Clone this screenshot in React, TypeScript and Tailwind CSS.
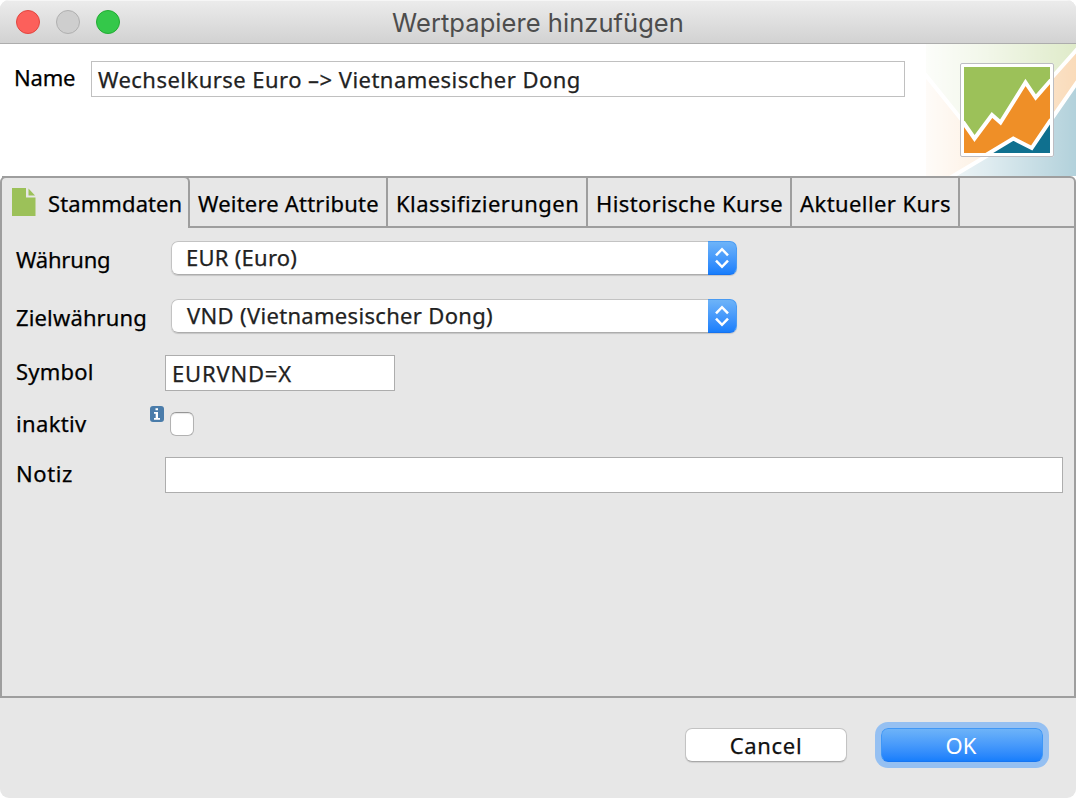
import type { ReactNode } from 'react';

function BannerArt() {
  return (
    <svg className="block h-[132px] w-[150px]" viewBox="926 44 150 132" fill="none">
      <defs>
        <linearGradient id="fade" x1="926" x2="1076" y1="0" y2="0" gradientUnits="userSpaceOnUse">
          <stop offset="0" stopColor="#fff" stopOpacity="0.97" />
          <stop offset="0.4" stopColor="#fff" stopOpacity="0.87" />
          <stop offset="1" stopColor="#fff" stopOpacity="0.68" />
        </linearGradient>
      </defs>
      <rect x="926" y="44" width="150" height="132" fill="#ef8f27" />
      <path d="M926 44H1076V50L1034 98L1000 170L926 76Z" fill="#9cc159" />
      <path d="M953 176L985 157L1034 142L1076 83V176Z" fill="#0f708f" />
      <rect x="926" y="44" width="150" height="132" fill="url(#fade)" />
      <path d="M924 73L970 130M1048 82L1080 46M1046 127L1080 78M948 179L990 154" stroke="#fff" strokeWidth="4" />
      <rect x="960.5" y="63.5" width="93" height="93" fill="#fff" />
      <path d="M964 67H1050V153H964Z" fill="#ef8f27" />
      <path d="M964 67H1050V81L1035.7 97.5L1025.5 83L1000.5 122.5L992 115L974.5 139L964 123Z" fill="#9cc159" />
      <path d="M989 153.5L1013.3 139L1031.7 148.3L1050 121V153Z" fill="#0f708f" />
      <path d="M963 122L974.5 138.5L992 115L1000.5 122.5L1025.5 82.5L1035.7 97.5L1051 80" stroke="#fff" strokeWidth="4" />
      <path d="M986 155L1013.3 138.5L1031.7 148L1051 119.500" stroke="#fff" strokeWidth="4" />
      <path d="M962.500 154.500H1051.500V65.500H962.500Z" stroke="#fff" strokeWidth="3" />
      <rect x="960.5" y="63.5" width="93" height="93" rx="1.5" stroke="#bdbdc2" />
    </svg>
  );
}

function Tab({ className, children }: { className: string; children: ReactNode }) {
  return (
    <div className={`flex h-[50px] items-center border-r-2 border-b-2 border-[#9e9e9e] pt-[2px] whitespace-nowrap ${className}`}>
      {children}
    </div>
  );
}

function Select({ className, children }: { className: string; children: ReactNode }) {
  return (
    <div className="ml-[6px] flex h-[34px] w-[566px] rounded-[7px] bg-white shadow-[0_1px_1px_rgba(0,0,0,0.15)]">
      <div className="flex flex-1 items-center rounded-l-[7px] border border-r-0 border-[#c3c3c3] border-b-[#adadad] pb-[2px] text-[#222]">
        <span className={className}>{children}</span>
      </div>
      <div className="flex w-[29px] items-center justify-center rounded-r-[7px] border border-l-0 border-[#4a9bf2] border-b-[#1672ee] bg-linear-to-b from-[#6db3f8] to-[#177efc]">
        <svg className="h-[22px] w-[14px]" viewBox="0 0 14 22" fill="none" stroke="#fff" strokeWidth="2.5">
          <path d="M1 8.300L7 2.200L13 8.300M1 13.700L7 19.800L13 13.700" />
        </svg>
      </div>
    </div>
  );
}

function Row({ label, className, labelClass, children }: { label: string; className: string; labelClass: string; children: ReactNode }) {
  return (
    <div className={`flex ${className}`}>
      <div className={`flex w-[150px] shrink-0 ${labelClass}`}>{label}</div>
      {children}
    </div>
  );
}

export default function App() {
  return (
    <div className="h-[798px] w-[1076px] bg-white">
      <div className="flex h-full flex-col overflow-hidden rounded-[9px] bg-[#e7e7e7] font-['Noto_Sans',sans-serif] text-[22px] leading-[30px] text-black [-webkit-text-stroke:0.25px]">
        <header className="grid h-[44px] shrink-0 grid-cols-[120px_1fr_120px] items-center border-b border-[#adadad] bg-linear-to-b from-[#ececec] to-[#d2d2d2] shadow-[inset_0_1px_0_#f6f6f6]">
          <div className="flex gap-4 pl-4">
            <span className="size-6 rounded-full border border-[#e2463f] bg-[#fc605b]" />
            <span className="size-6 rounded-full border border-[#b0b0b0] bg-[#cecece]" />
            <span className="size-6 rounded-full border border-[#22ac33] bg-[#34c84a]" />
          </div>
          <h1 className="pt-[2px] text-center font-['Inter',sans-serif] text-[25.5px] tracking-[0.05px] whitespace-nowrap text-[#4d4d4d] [-webkit-text-stroke:0px]">
            Wertpapiere hinzufügen
          </h1>
        </header>

        <section className="flex h-[132px] shrink-0 bg-white">
          <div className="w-[91px] pt-[18px] pl-[14px] tracking-[-0.2px]">Name</div>
          <div className="mt-[17px] mr-[21px] flex h-[36px] flex-1 items-center border border-[#c0c0c0] pb-px pl-[6px] tracking-[0.46px] text-[#222]">
            Wechselkurse Euro –&gt; Vietnamesischer Dong
          </div>
          <BannerArt />
        </section>

        <main className="h-[522px] shrink-0 bg-white bg-linear-to-b from-white from-[4px] to-[#e7e7e7] to-[4px]">
          <div className="h-full rounded-t-[6px] border-2 border-[#9e9e9e] bg-[#e7e7e7]">
            <nav className="flex">
              <div className="-mt-0.5 flex h-[52px] w-[188px] items-center rounded-tr-[6px] border-t-2 border-r-2 border-[#9e9e9e] pl-[10px] whitespace-nowrap">
                <svg className="mr-[12px] mb-[2px] h-[28px] w-[24px] shrink-0" viewBox="0 0 24 28" fill="#9cc159">
                  <path d="M0 0H14V9.500H23.500V28H0Z" />
                  <path d="M16.500 0.500L23 7.500H16.500Z" />
                </svg>
                <span className="tracking-[0.1px]">Stammdaten</span>
              </div>
              <Tab className="w-[198px] pl-[8px] tracking-[0.2px]">Weitere Attribute</Tab>
              <Tab className="w-[200px] pl-[8px] tracking-[0.43px]">Klassifizierungen</Tab>
              <Tab className="w-[204px] pl-[8px] tracking-[0.38px]">Historische Kurse</Tab>
              <Tab className="w-[168px] pl-[8px] tracking-[0.41px]">Aktueller Kurs</Tab>
              <div className="h-[50px] flex-1 border-b-2 border-[#9e9e9e]" />
            </nav>

            <form className="flex flex-col pt-[13px] pl-[13px]">
              <Row label="Währung" className="h-[58px]" labelClass="pt-[3px] pl-px tracking-[-0.2px]">
                <Select className="pl-[14px] tracking-[0.25px]">EUR (Euro)</Select>
              </Row>
              <Row label="Zielwährung" className="h-[56px]" labelClass="pt-[3px] pl-px tracking-[0.15px]">
                <Select className="pl-[15px] tracking-[0.32px]">VND (Vietnamesischer Dong)</Select>
              </Row>
              <Row label="Symbol" className="h-[51px]" labelClass="pt-px pl-px tracking-[0.2px]">
                <div className="flex h-[36px] w-[230px] items-center border border-[#adadad] bg-white pb-px pl-[6px] tracking-[0.8px] text-[#222]">
                  EURVND=X
                </div>
              </Row>
              <Row label="inaktiv" className="h-[51px]" labelClass="pt-[2px] pl-px tracking-[0.34px]">
                <div className="-ml-[15px] flex gap-[6px]">
                  <svg className="h-[16px] w-[14px]" viewBox="0 0 14 16">
                    <rect width="14" height="16" rx="3" fill="#4a7caa" />
                    <path d="M5.500 2.200H8V4.200H5.500ZM4 6H8V12H10V13.800H4V12H5.700V7.800H4Z" fill="#fff" />
                  </svg>
                  <span className="mt-[6px] size-6 rounded-[6px] border border-[#b2b2b2] border-t-[#969696] bg-white shadow-[inset_0_1px_1px_rgba(0,0,0,0.1)]" />
                </div>
              </Row>
              <Row label="Notiz" className="h-[36px]" labelClass="pt-px pl-px tracking-[0.6px]">
                <div className="h-[36px] w-[898px] border border-[#adadad] bg-white" />
              </Row>
            </form>
          </div>
        </main>

        <footer className="flex justify-end gap-[34px] pt-[30px] pr-[33px]">
          <div className="flex h-[34px] w-[162px] items-center justify-center rounded-[7px] border border-[#c3c3c3] border-b-[#a8a8a8] bg-white pb-px tracking-[0.7px] text-[#111] shadow-[0_1px_1px_rgba(0,0,0,0.1)]">
            Cancel
          </div>
          <div className="flex h-[34px] w-[162px] items-center justify-center rounded-[7px] border border-[#3f97f6] border-b-[#1676f2] bg-linear-to-b from-[#6db3f8] to-[#177efc] pr-[2px] pb-px text-white shadow-[0_0_0_6px_#95c0f2] [-webkit-text-stroke:0px]">
            OK
          </div>
        </footer>
      </div>
    </div>
  );
}
